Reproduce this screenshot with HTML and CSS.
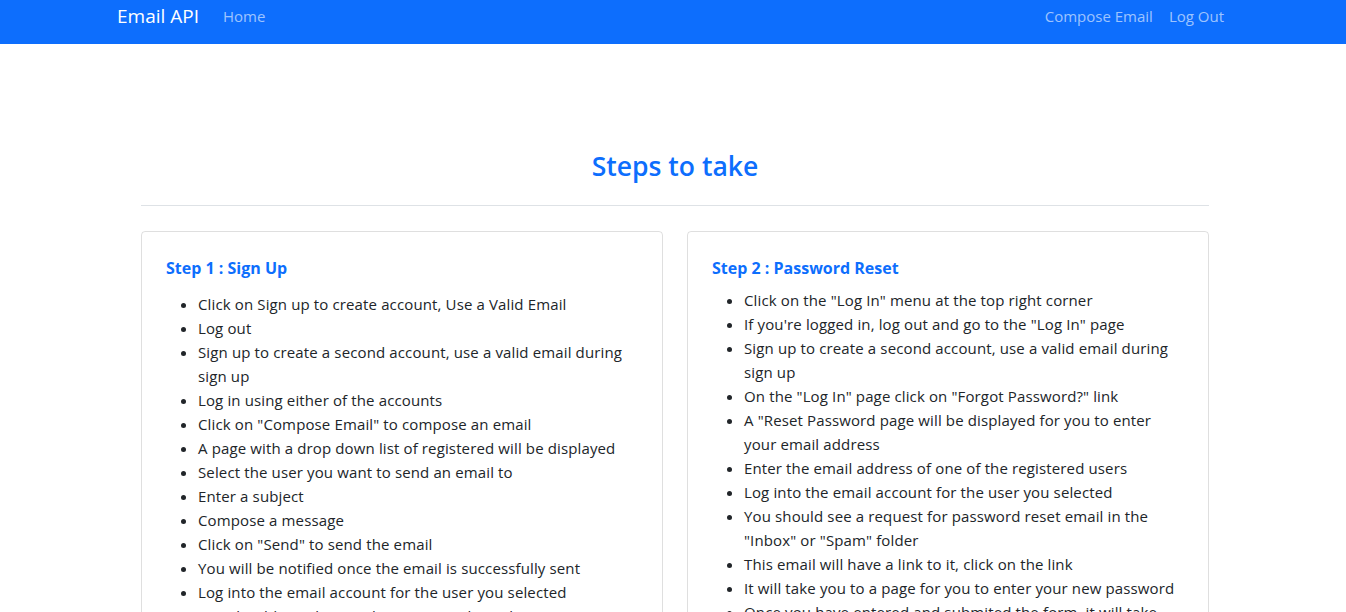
FILE: index.html
```html
<!DOCTYPE html>
<html lang="en">
<head>
<meta charset="utf-8">
<title>Email API</title>
<link rel="stylesheet" href="styles.css">
</head>
<body>
<nav class="navbar">
  <div class="nav-inner">
    <a class="brand" href="#">Email API</a>
    <a class="nav-link" href="#">Home</a>
    <div class="nav-right">
      <a class="nav-link" href="#">Compose Email</a>
      <a class="nav-link" href="#">Log Out</a>
    </div>
  </div>
</nav>
<main class="main">
  <h3 class="title">Steps to take</h3>
  <hr class="divider">
  <div class="cards">
    <div class="card">
      <h6 class="card-title">Step 1 : Sign Up</h6>
      <ul class="steps">
        <li>Click on Sign up to create account, Use a Valid Email</li>
        <li>Log out</li>
        <li>Sign up to create a second account, use a valid email during sign up</li>
        <li>Log in using either of the accounts</li>
        <li>Click on "Compose Email" to compose an email</li>
        <li>A page with a drop down list of registered will be displayed</li>
        <li>Select the user you want to send an email to</li>
        <li>Enter a subject</li>
        <li>Compose a message</li>
        <li>Click on "Send" to send the email</li>
        <li>You will be notified once the email is successfully sent</li>
        <li>Log into the email account for the user you selected</li>
        <li>You should see the email you sent in the "Inbox" or "Spam" folder</li>
      </ul>
    </div>
    <div class="card">
      <h6 class="card-title card-title-b">Step 2 : Password Reset</h6>
      <ul class="steps">
        <li>Click on the "Log In" menu at the top right corner</li>
        <li>If you're logged in, log out and go to the "Log In" page</li>
        <li>Sign up to create a second account, use a valid email during sign up</li>
        <li>On the "Log In" page click on "Forgot Password?" link</li>
        <li>A "Reset Password page will be displayed for you to enter your email address</li>
        <li>Enter the email address of one of the registered users</li>
        <li>Log into the email account for the user you selected</li>
        <li>You should see a request for password reset email in the "Inbox" or "Spam" folder</li>
        <li>This email will have a link to it, click on the link</li>
        <li>It will take you to a page for you to enter your new password</li>
        <li>Once you have entered and submited the form, it will take you to the "Log In" page</li>
      </ul>
    </div>
  </div>
</main>
</body>
</html>
```
FILE: styles.css
```css
* { box-sizing: border-box; }
body {
  margin: 0;
  font-family: "Open Sans", "Noto Sans", sans-serif;
  font-size: 15px;
  line-height: 24px;
  color: #212529;
  background: #fff;
}
a { text-decoration: none; }
.navbar {
  background: #0d6efd;
  height: 44px;
}
.nav-inner {
  width: 1140px;
  margin: 0 auto;
  padding: 0 12px;
  display: flex;
  align-items: flex-start;
  height: 44px;
}
.brand {
  color: #fff;
  font-size: 19px;
  line-height: 32px;
  margin-right: 16px;
  padding-left: 2px;
}
.nav-link {
  color: rgba(255,255,255,.6);
  font-size: 15px;
  line-height: 32px;
  padding: 0 8px;
}
.nav-right {
  margin-left: auto;
  display: flex;
  margin-right: -1px;
}
.main {
  width: 1072px;
  margin: 0 auto;
  padding: 105px 0 0 4px;
}
.title {
  margin: 0;
  text-align: center;
  color: #0d6efd;
  font-size: 26.5px;
  font-weight: 600;
  line-height: 34px;
}
.divider {
  margin: 22px 0 0;
  border: 0;
  border-top: 1px solid #dee2e6;
}
.cards {
  margin-top: 25px;
  display: grid;
  grid-template-columns: 1fr 1fr;
  gap: 24px;
  align-items: start;
}
.card {
  border: 1px solid rgba(0,0,0,.125);
  border-radius: 4px;
  padding: 26px 24px 24px;
}
.card-title {
  margin: 0 0 14px;
  color: #0d6efd;
  font-size: 16px;
  font-weight: 700;
  line-height: 20px;
}
.card-title-b { margin-bottom: 10px; }
.steps {
  margin: 0;
  padding-left: 32px;
  letter-spacing: 0.13px;
}
```
